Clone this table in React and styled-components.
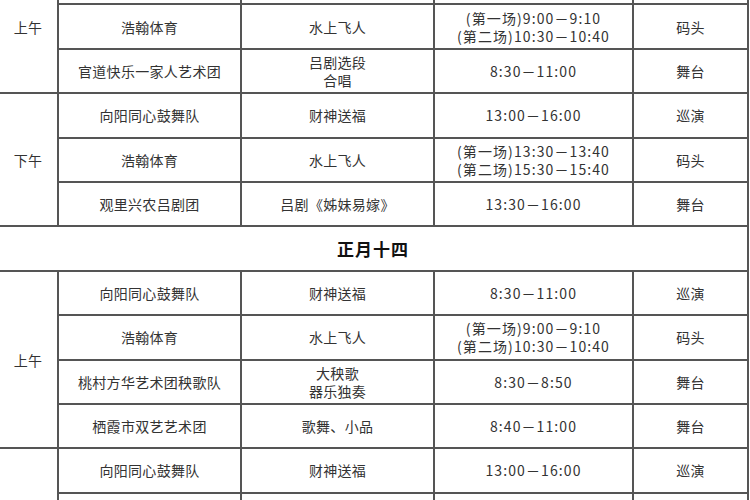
import React from "react";
import styled, { createGlobalStyle } from "styled-components";

const Global = createGlobalStyle`
  html, body { margin: 0; padding: 0; background: #fff; overflow: hidden; }
  body { font-family: "Noto Sans CJK SC", "Noto Sans", sans-serif; color: #333; }
`;

const Page = styled.div`
  width: 750px;
  height: 500px;
  overflow: hidden;
  background: #fff;
`;

const Table = styled.table`
  width: 750px;
  margin: -41px 0 0 -3px;
  border-collapse: collapse;
  table-layout: fixed;
  border: 2px solid #555;
`;

const Cell = styled.td`
  border: 2px solid #555;
  height: 42.4px;
  padding: 0;
  text-align: center;
  vertical-align: middle;
  font-size: 14px;
  line-height: 18px;
  letter-spacing: 0.3px;
  color: #333;
  white-space: nowrap;
`;

const TimeCell = styled(Cell)`
  letter-spacing: 1.1px;
`;

const TitleCell = styled.td`
  border: 2px solid #555;
  height: 42.4px;
  padding: 0;
  text-align: center;
  vertical-align: middle;
  font-size: 17px;
  font-weight: 700;
  letter-spacing: 1px;
  color: #111;
`;

const Line = styled.div`
  display: block;
`;

const day1 = [
  {
    period: "上午",
    rows: [
      ["向阳同心鼓舞队", ["财神送福"], ["8:30－11:00"], "巡演"],
      ["浩翰体育", ["水上飞人"], ["(第一场)9:00－9:10", "(第二场)10:30－10:40"], "码头"],
      ["官道快乐一家人艺术团", ["吕剧选段", "合唱"], ["8:30－11:00"], "舞台"],
    ],
  },
  {
    period: "下午",
    rows: [
      ["向阳同心鼓舞队", ["财神送福"], ["13:00－16:00"], "巡演"],
      ["浩翰体育", ["水上飞人"], ["(第一场)13:30－13:40", "(第二场)15:30－15:40"], "码头"],
      ["观里兴农吕剧团", ["吕剧《姊妹易嫁》"], ["13:30－16:00"], "舞台"],
    ],
  },
];

const day2 = [
  {
    period: "上午",
    rows: [
      ["向阳同心鼓舞队", ["财神送福"], ["8:30－11:00"], "巡演"],
      ["浩翰体育", ["水上飞人"], ["(第一场)9:00－9:10", "(第二场)10:30－10:40"], "码头"],
      ["桃村方华艺术团秧歌队", ["大秧歌", "器乐独奏"], ["8:30－8:50"], "舞台"],
      ["栖霞市双艺艺术团", ["歌舞、小品"], ["8:40－11:00"], "舞台"],
    ],
  },
  {
    period: "下午",
    rows: [
      ["向阳同心鼓舞队", ["财神送福"], ["13:00－16:00"], "巡演"],
      ["浩翰体育", ["水上飞人"], ["(第一场)13:30－13:40", "(第二场)15:30－15:40"], "码头"],
      ["观里兴农吕剧团", ["吕剧《姊妹易嫁》"], ["13:30－16:00"], "舞台"],
    ],
  },
];

function Group({ group, prefix }) {
  return group.rows.map((r, i) => (
    <tr key={prefix + i}>
      {i === 0 && <Cell rowSpan={group.rows.length}>{group.period}</Cell>}
      <Cell>{r[0]}</Cell>
      <Cell>
        {r[1].map((t) => (
          <Line key={t}>{t}</Line>
        ))}
      </Cell>
      <TimeCell>
        {r[2].map((t) => (
          <Line key={t}>{t}</Line>
        ))}
      </TimeCell>
      <Cell>{r[3]}</Cell>
    </tr>
  ));
}

export default function App() {
  return (
    <Page>
      <Global />
      <Table>
        <colgroup>
          <col style={{ width: "60px" }} />
          <col style={{ width: "183px" }} />
          <col style={{ width: "193px" }} />
          <col style={{ width: "199px" }} />
          <col style={{ width: "115px" }} />
        </colgroup>
        <tbody>
          {day1.map((g, gi) => (
            <Group key={"a" + gi} group={g} prefix={"a" + gi} />
          ))}
          <tr>
            <TitleCell colSpan={5}>正月十四</TitleCell>
          </tr>
          {day2.map((g, gi) => (
            <Group key={"b" + gi} group={g} prefix={"b" + gi} />
          ))}
        </tbody>
      </Table>
    </Page>
  );
}
